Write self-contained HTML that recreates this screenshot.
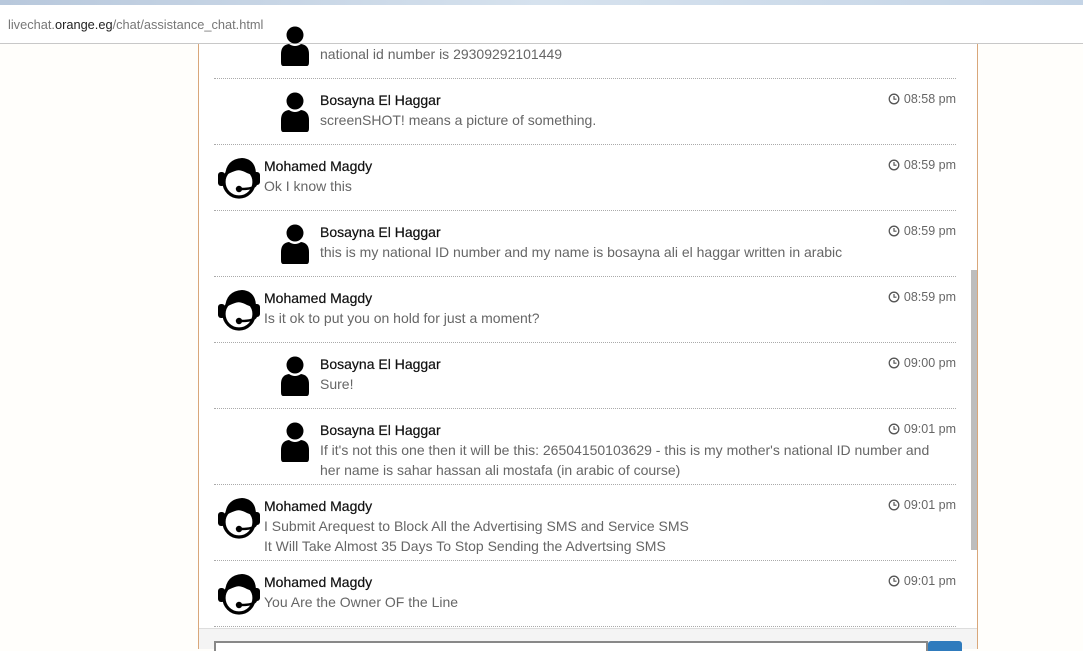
<!DOCTYPE html>
<html><head><meta charset="utf-8"><style>
*{margin:0;padding:0;box-sizing:border-box}
body{width:1083px;height:649px;overflow:hidden;background:#fffefb;font-family:"Liberation Sans",Arial,sans-serif;position:relative}
.top{position:absolute;left:0;top:0;width:1083px;height:5px;background:linear-gradient(90deg,#b8c8dc,#d6e2ee,#c4d4e6)}
.url{position:absolute;left:0;top:5px;width:1083px;height:39px;background:#fff;border-bottom:1px solid #c8c8c8;font-size:12.8px;color:#777;padding:12px 0 0 8px}
.url b{font-weight:normal;color:#222}
.panel{position:absolute;left:198px;top:44px;width:780px;height:605px;background:#fff;border-left:1px solid #d9a77a;border-right:1px solid #d9a77a}
.div{position:absolute;left:214px;width:742px;border-top:1px dotted #aaa}
.name{position:absolute;font-size:14px;color:#111;-webkit-text-stroke:0.2px #111}
.msg{position:absolute;font-size:14px;color:#666;line-height:20px}
.time{position:absolute;right:127px;font-size:12.5px;color:#666}
.time svg{vertical-align:-2px;margin-right:4px}
.av{position:absolute}
.sb{position:absolute;left:971px;top:270px;width:6px;height:280px;background:#bdbdbd}
.bot{position:absolute;left:199px;top:628px;width:778px;height:21px;background:#f4f4f4;border-top:1px solid #ddd}
.inp{position:absolute;left:214px;top:641px;width:714px;height:10px;border:2px solid #888;border-bottom:none;background:#fff}
.btn{position:absolute;left:928px;top:641px;width:34px;height:10px;background:#2f7bbd;border-radius:3px 3px 0 0}
</style></head><body>
<div class="top"></div>
<div class="url">livechat.<b>orange.eg</b>/chat/assistance_chat.html</div>
<div class="panel"></div>
<div class="sb"></div>

<svg width="0" height="0" style="position:absolute">
<defs>
<symbol id="u" viewBox="0 0 30 42"><circle cx="15" cy="9" r="8.5" fill="#000"/><path d="M3 40 Q1 40 1 36 L1 28 Q1 19 9 18 Q15 22 21 18 Q29 19 29 28 L29 36 Q29 40 27 40 Z" fill="#000"/></symbol>
<symbol id="a" viewBox="0 0 50 50"><circle cx="25" cy="28" r="15" fill="none" stroke="#000" stroke-width="3.2"/><path d="M11 22 Q12 5 28 4 Q42 5 42 21 Q36 21 31 18 Q25 15 21 17 Q15 19 11 22 Z" fill="#000"/><rect x="4" y="18" width="7" height="14" rx="3" fill="#000"/><rect x="39" y="18" width="7" height="13" rx="3" fill="#000"/><path d="M42 30 Q41 35 27 35" fill="none" stroke="#000" stroke-width="2.4"/><circle cx="25" cy="35" r="3.2" fill="#000"/></symbol>
<symbol id="c" viewBox="0 0 12 12"><circle cx="6" cy="6" r="4.8" fill="none" stroke="#555" stroke-width="1.3"/><path d="M6 3v3.2h2.5" fill="none" stroke="#555" stroke-width="1.2"/></symbol>
</defs></svg>

<svg class="av" style="left:280px;top:26px" width="30" height="42"><use href="#u"/></svg>
<div class="msg" style="left:320px;top:44px">national id number is 29309292101449</div>
<div class="div" style="top:78px"></div>

<svg class="av" style="left:280px;top:92px" width="30" height="42"><use href="#u"/></svg>
<div class="name" style="left:320px;top:92px">Bosayna El Haggar</div>
<div class="time" style="top:92px"><svg width="12" height="12"><use href="#c"/></svg>08:58 pm</div>
<div class="msg" style="left:320px;top:110px">screenSHOT! means a picture of something.</div>
<div class="div" style="top:144px"></div>

<svg class="av" style="left:214px;top:154px" width="50" height="50"><use href="#a"/></svg>
<div class="name" style="left:264px;top:158px">Mohamed Magdy</div>
<div class="time" style="top:158px"><svg width="12" height="12"><use href="#c"/></svg>08:59 pm</div>
<div class="msg" style="left:264px;top:176px">Ok I know this</div>
<div class="div" style="top:210px"></div>

<svg class="av" style="left:280px;top:224px" width="30" height="42"><use href="#u"/></svg>
<div class="name" style="left:320px;top:224px">Bosayna El Haggar</div>
<div class="time" style="top:224px"><svg width="12" height="12"><use href="#c"/></svg>08:59 pm</div>
<div class="msg" style="left:320px;top:242px">this is my national ID number and my name is bosayna ali el haggar written in arabic</div>
<div class="div" style="top:276px"></div>

<svg class="av" style="left:214px;top:286px" width="50" height="50"><use href="#a"/></svg>
<div class="name" style="left:264px;top:290px">Mohamed Magdy</div>
<div class="time" style="top:290px"><svg width="12" height="12"><use href="#c"/></svg>08:59 pm</div>
<div class="msg" style="left:264px;top:308px">Is it ok to put you on hold for just a moment?</div>
<div class="div" style="top:342px"></div>

<svg class="av" style="left:280px;top:356px" width="30" height="42"><use href="#u"/></svg>
<div class="name" style="left:320px;top:356px">Bosayna El Haggar</div>
<div class="time" style="top:356px"><svg width="12" height="12"><use href="#c"/></svg>09:00 pm</div>
<div class="msg" style="left:320px;top:374px">Sure!</div>
<div class="div" style="top:408px"></div>

<svg class="av" style="left:280px;top:422px" width="30" height="42"><use href="#u"/></svg>
<div class="name" style="left:320px;top:422px">Bosayna El Haggar</div>
<div class="time" style="top:422px"><svg width="12" height="12"><use href="#c"/></svg>09:01 pm</div>
<div class="msg" style="left:320px;top:440px;width:628px">If it's not this one then it will be this: 26504150103629 - this is my mother's national ID number and her name is sahar hassan ali mostafa (in arabic of course)</div>
<div class="div" style="top:484px"></div>

<svg class="av" style="left:214px;top:494px" width="50" height="50"><use href="#a"/></svg>
<div class="name" style="left:264px;top:498px">Mohamed Magdy</div>
<div class="time" style="top:498px"><svg width="12" height="12"><use href="#c"/></svg>09:01 pm</div>
<div class="msg" style="left:264px;top:516px">I Submit Arequest to Block All the Advertising SMS and Service SMS<br>It Will Take Almost 35 Days To Stop Sending the Advertsing SMS</div>
<div class="div" style="top:560px"></div>

<svg class="av" style="left:214px;top:570px" width="50" height="50"><use href="#a"/></svg>
<div class="name" style="left:264px;top:574px">Mohamed Magdy</div>
<div class="time" style="top:574px"><svg width="12" height="12"><use href="#c"/></svg>09:01 pm</div>
<div class="msg" style="left:264px;top:592px">You Are the Owner OF the Line</div>
<div class="div" style="top:626px"></div>

<div class="bot"></div>
<div class="inp"></div>
<div class="btn"></div>
</body></html>
